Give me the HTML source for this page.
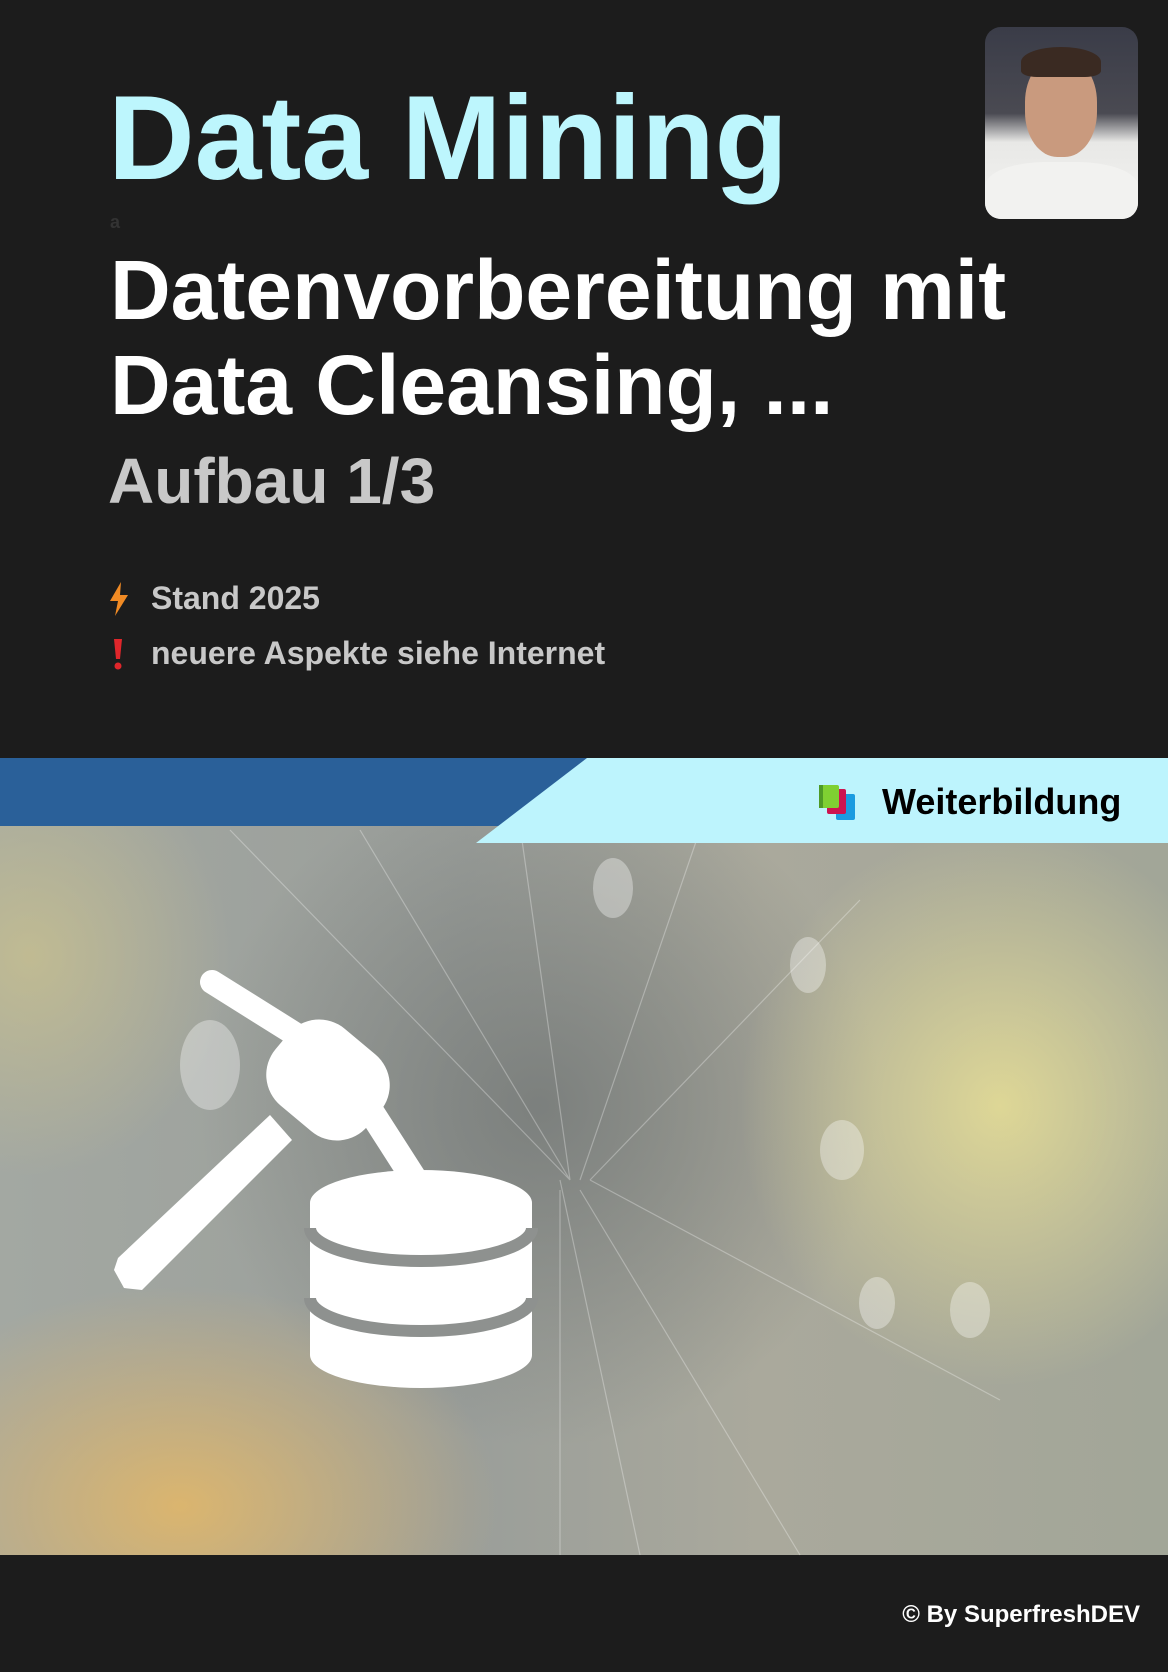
<!DOCTYPE html>
<html><head><meta charset="utf-8"><style>
*{margin:0;padding:0;box-sizing:border-box}
body{width:1168px;height:1672px;background:#1c1c1c;position:relative;overflow:hidden;font-family:"Liberation Sans",Arial,sans-serif;font-weight:bold}
.abs{position:absolute;white-space:nowrap}
</style></head><body>
<div class="abs" style="left:108px;top:68px;font-size:120px;line-height:140px;color:#bdf6fd">Data Mining</div>
<div class="abs" style="left:985px;top:27px;width:153px;height:192px;border-radius:16px;overflow:hidden;background:linear-gradient(180deg,#3a3c48 0%,#4a4a52 45%,#e8e8e6 60%,#f4f4f2 100%)">
 <div style="position:absolute;left:40px;top:30px;width:72px;height:100px;border-radius:45%;background:#c99a7e"></div>
 <div style="position:absolute;left:36px;top:20px;width:80px;height:30px;border-radius:50% 50% 20% 20%;background:#3a2a22"></div>
 <div style="position:absolute;left:0;top:135px;width:153px;height:60px;background:#f2f2f0;border-radius:40% 40% 0 0"></div>
</div>
<div class="abs" style="left:110px;top:212px;font-size:18px;color:#333">a</div>
<div class="abs" style="left:110px;top:243px;font-size:84px;line-height:95px;color:#fff">Datenvorbereitung mit<br>Data Cleansing, ...</div>
<div class="abs" style="left:108px;top:446px;font-size:64px;line-height:70px;color:#c8c8c8">Aufbau 1/3</div>
<svg class="abs" style="left:108px;top:582px" width="22" height="34" viewBox="0 0 22 34"><path d="M13 0 L2 19 L10 19 L7 34 L20 13 L12 13 Z" fill="#f08a24"/></svg>
<div class="abs" style="left:151px;top:578px;font-size:32px;line-height:40px;color:#c8c8c8">Stand 2025</div>
<svg class="abs" style="left:112px;top:637px" width="12" height="34" viewBox="0 0 12 34"><path d="M2 2 L10 2 L8 22 L4 22 Z" fill="#e0262b"/><circle cx="6" cy="29" r="3.5" fill="#e0262b"/></svg>
<div class="abs" style="left:151px;top:633px;font-size:32px;line-height:40px;color:#c8c8c8">neuere Aspekte siehe Internet</div>

<div class="abs" style="left:0;top:826px;width:1168px;height:729px;background:
radial-gradient(ellipse 260px 280px at 1000px 280px,rgba(228,220,150,0.9),rgba(228,220,150,0)),
radial-gradient(ellipse 320px 220px at 180px 680px,rgba(222,182,108,0.95),rgba(222,182,108,0)),
radial-gradient(ellipse 200px 220px at 30px 130px,rgba(205,195,140,0.7),rgba(205,195,140,0)),
radial-gradient(ellipse 340px 340px at 540px 280px,rgba(120,124,122,0.9),rgba(120,124,122,0)),
linear-gradient(90deg,#a3a8a2 0%,#9a9e9a 40%,#aaa99c 65%,#a2a698 100%)"></div>
<svg class="abs" style="left:0;top:0" width="1168" height="1672">
 <g fill="rgba(255,255,255,0.35)">
  <ellipse cx="613" cy="888" rx="20" ry="30"/><ellipse cx="842" cy="1150" rx="22" ry="30"/><ellipse cx="877" cy="1303" rx="18" ry="26"/><ellipse cx="970" cy="1310" rx="20" ry="28"/><ellipse cx="210" cy="1065" rx="30" ry="45"/><ellipse cx="808" cy="965" rx="18" ry="28"/>
 </g>
 <g stroke="rgba(255,255,255,0.3)" stroke-width="1.2" fill="none">
  <path d="M230 830 L570 1180 M360 830 L570 1180 M520 826 L570 1180 M700 830 L580 1180 M860 900 L590 1180 M560 1180 L640 1555 M580 1190 L800 1555 M590 1180 L1000 1400 M560 1190 L560 1555"/>
 </g>
 <g fill="#fff" stroke="none">
  <line x1="212" y1="982" x2="295" y2="1034" stroke="#fff" stroke-width="24" stroke-linecap="round"/>
  <rect x="268" y="1030" width="120" height="100" rx="40" transform="rotate(40 328 1080)"/>
  <polygon points="270,1115 292,1140 142,1290 124,1288 114,1270 118,1258"/>
  <path d="M310 1203 A111 33 0 0 1 532 1203 L532 1355 A111 33 0 0 1 310 1355 Z"/>
 </g>
 <g stroke="#8e918f" stroke-width="12" fill="none">
  <path d="M310 1228 A111 33 0 0 0 532 1228"/>
  <path d="M310 1298 A111 33 0 0 0 532 1298"/>
 </g>
 <line x1="370" y1="1110" x2="420" y2="1188" stroke="#fff" stroke-width="26" stroke-linecap="round"/>
 <rect x="0" y="758" width="1168" height="68" fill="#2a6099"/>
 <polygon points="587,758 1168,758 1168,843 476,843" fill="#bdf4fd"/>
 <rect x="836" y="794" width="19" height="26" rx="2" fill="#1a9be0"/>
 <rect x="827" y="789" width="19" height="25" rx="2" fill="#cc1450"/>
 <rect x="819" y="785" width="20" height="23" rx="2" fill="#7fd032"/>
 <rect x="819" y="785" width="4" height="23" fill="#4e9a26"/>
</svg>
<div class="abs" style="left:882px;top:780px;font-size:36px;line-height:44px;color:#000">Weiterbildung</div>
<div class="abs" style="right:28px;top:1600px;font-size:24px;line-height:30px;color:#fff">© By SuperfreshDEV</div>
</body></html>
